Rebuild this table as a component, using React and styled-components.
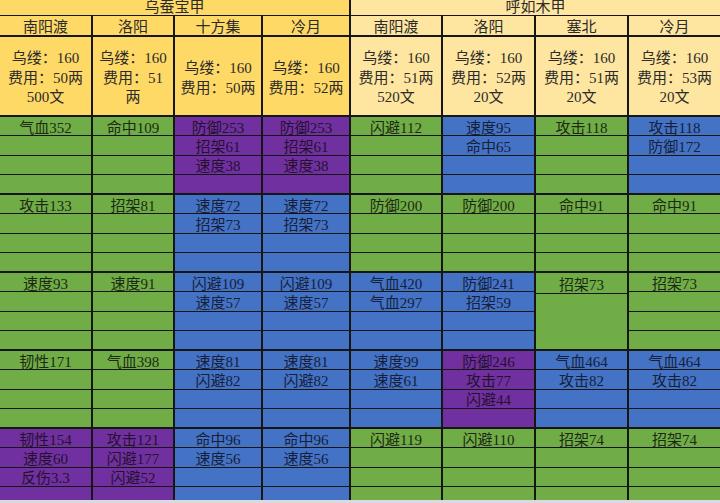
import React from "react";
import styled, { createGlobalStyle } from "styled-components";

const GlobalStyle = createGlobalStyle`
  html, body { margin: 0; padding: 0; background: #d9d9df; }
  body { font-family: "Liberation Serif", "Noto Sans CJK SC", serif; }
`;

const COLS = "93px 82px 88px 88px 92px 93px 93px 91px";
const LINE = "#161616";

const COLORS = {
  g: "#70ad47",
  b: "#4472c4",
  p: "#7030a0",
};

const TEXT = {
  g: "#1c2a12",
  b: "#15203c",
  p: "#26102f",
};

const Frame = styled.div`
  width: 720px;
  height: 500px;
  overflow: hidden;
`;

const Sheet = styled.div`
  display: grid;
  grid-template-columns: ${COLS};
  grid-template-rows: 16px 21px 80px repeat(5, 78px);
  font-size: 15px;
  color: #2b2b2b;
`;

const TitleCell = styled.div`
  grid-column: span 4;
  background: ${(p) => (p.$light ? "#ffe6a0" : "#ffd966")};
  border-bottom: 1px solid ${LINE};
  border-right: ${(p) => (p.$last ? "0" : `2px solid ${LINE}`)};
  box-sizing: border-box;
  display: flex;
  justify-content: center;
  align-items: flex-end;
  line-height: 15px;
  overflow: hidden;
  white-space: nowrap;
`;

const HeaderCell = styled.div`
  background: ${(p) => (p.$light ? "#ffe6a0" : "#ffd966")};
  border-bottom: 2px solid ${LINE};
  border-right: ${(p) => (p.$last ? "0" : `2px solid ${LINE}`)};
  box-sizing: border-box;
  display: flex;
  justify-content: center;
  align-items: center;
  white-space: nowrap;
  line-height: 19px;
  padding-top: 3px;
`;

const InfoCell = styled(HeaderCell)`
  flex-direction: column;
  text-align: center;
  padding-top: 5px;
`;

const InfoLine = styled.div`
  line-height: 19.5px;
  white-space: nowrap;
`;

const BlockCol = styled.div`
  display: flex;
  flex-direction: column;
  background: ${(p) => COLORS[p.$c]};
  color: ${(p) => TEXT[p.$c]};
  border-bottom: 2px solid ${LINE};
  border-right: ${(p) => (p.$last ? "0" : `2px solid ${LINE}`)};
  box-sizing: border-box;
`;

const SubCell = styled.div`
  flex: ${(p) => p.$span || 1} 1 0;
  border-bottom: ${(p) => (p.$end ? "0" : `1px solid ${LINE}`)};
  display: flex;
  align-items: center;
  justify-content: center;
  white-space: nowrap;
  line-height: 16px;
  padding-top: 3px;
  min-height: 0;
  overflow: visible;
`;

const TITLES = [
  { t: "乌蚕宝甲", light: false },
  { t: "呼如木甲", light: true },
];

const HEADERS = ["南阳渡", "洛阳", "十方集", "冷月", "南阳渡", "洛阳", "塞北", "冷月"];

const INFO = [
  ["乌缕：160", "费用：50两", "500文"],
  ["乌缕：160", "费用：51", "两"],
  ["乌缕：160", "费用：50两"],
  ["乌缕：160", "费用：52两"],
  ["乌缕：160", "费用：51两", "520文"],
  ["乌缕：160", "费用：52两", "20文"],
  ["乌缕：160", "费用：51两", "20文"],
  ["乌缕：160", "费用：53两", "20文"],
];

const BLOCKS = [
  [
    ["g", ["气血352"]],
    ["g", ["命中109"]],
    ["p", ["防御253", "招架61", "速度38"]],
    ["p", ["防御253", "招架61", "速度38"]],
    ["g", ["闪避112"]],
    ["b", ["速度95", "命中65"]],
    ["g", ["攻击118"]],
    ["b", ["攻击118", "防御172"]],
  ],
  [
    ["g", ["攻击133"]],
    ["g", ["招架81"]],
    ["b", ["速度72", "招架73"]],
    ["b", ["速度72", "招架73"]],
    ["g", ["防御200"]],
    ["g", ["防御200"]],
    ["g", ["命中91"]],
    ["g", ["命中91"]],
  ],
  [
    ["g", ["速度93"]],
    ["g", ["速度91"]],
    ["b", ["闪避109", "速度57"]],
    ["b", ["闪避109", "速度57"]],
    ["b", ["气血420", "气血297"]],
    ["b", ["防御241", "招架59"]],
    ["g", ["招架73"], true],
    ["g", ["招架73"]],
  ],
  [
    ["g", ["韧性171"]],
    ["g", ["气血398"]],
    ["b", ["速度81", "闪避82"]],
    ["b", ["速度81", "闪避82"]],
    ["b", ["速度99", "速度61"]],
    ["p", ["防御246", "攻击77", "闪避44"]],
    ["b", ["气血464", "攻击82"]],
    ["b", ["气血464", "攻击82"]],
  ],
  [
    ["p", ["韧性154", "速度60", "反伤3.3"]],
    ["p", ["攻击121", "闪避177", "闪避52"]],
    ["b", ["命中96", "速度56"]],
    ["b", ["命中96", "速度56"]],
    ["g", ["闪避119"]],
    ["g", ["闪避110"]],
    ["g", ["招架74"]],
    ["g", ["招架74"]],
  ],
];

function Column({ color, items, merged, last }) {
  const rows = merged
    ? [{ t: items[0], span: 1 }, { t: "", span: 3 }]
    : [0, 1, 2, 3].map((i) => ({ t: items[i] || "", span: 1 }));
  return (
    <BlockCol $c={color} $last={last}>
      {rows.map((r, i) => (
        <SubCell key={i} $span={r.span} $end={i === rows.length - 1}>
          {r.t}
        </SubCell>
      ))}
    </BlockCol>
  );
}

export default function App() {
  return (
    <>
      <GlobalStyle />
      <Frame>
        <Sheet>
          {TITLES.map((t, i) => (
            <TitleCell key={t.t} $light={t.light} $last={i === 1}>
              {t.t}
            </TitleCell>
          ))}
          {HEADERS.map((h, i) => (
            <HeaderCell key={i} $light={i >= 4} $last={i === 7}>
              {h}
            </HeaderCell>
          ))}
          {INFO.map((lines, i) => (
            <InfoCell key={i} $light={i >= 4} $last={i === 7}>
              {lines.map((l, j) => (
                <InfoLine key={j}>{l}</InfoLine>
              ))}
            </InfoCell>
          ))}
          {BLOCKS.map((block, b) =>
            block.map(([c, items, merged], i) => (
              <Column key={`${b}-${i}`} color={c} items={items} merged={merged} last={i === 7} />
            ))
          )}
        </Sheet>
      </Frame>
    </>
  );
}
